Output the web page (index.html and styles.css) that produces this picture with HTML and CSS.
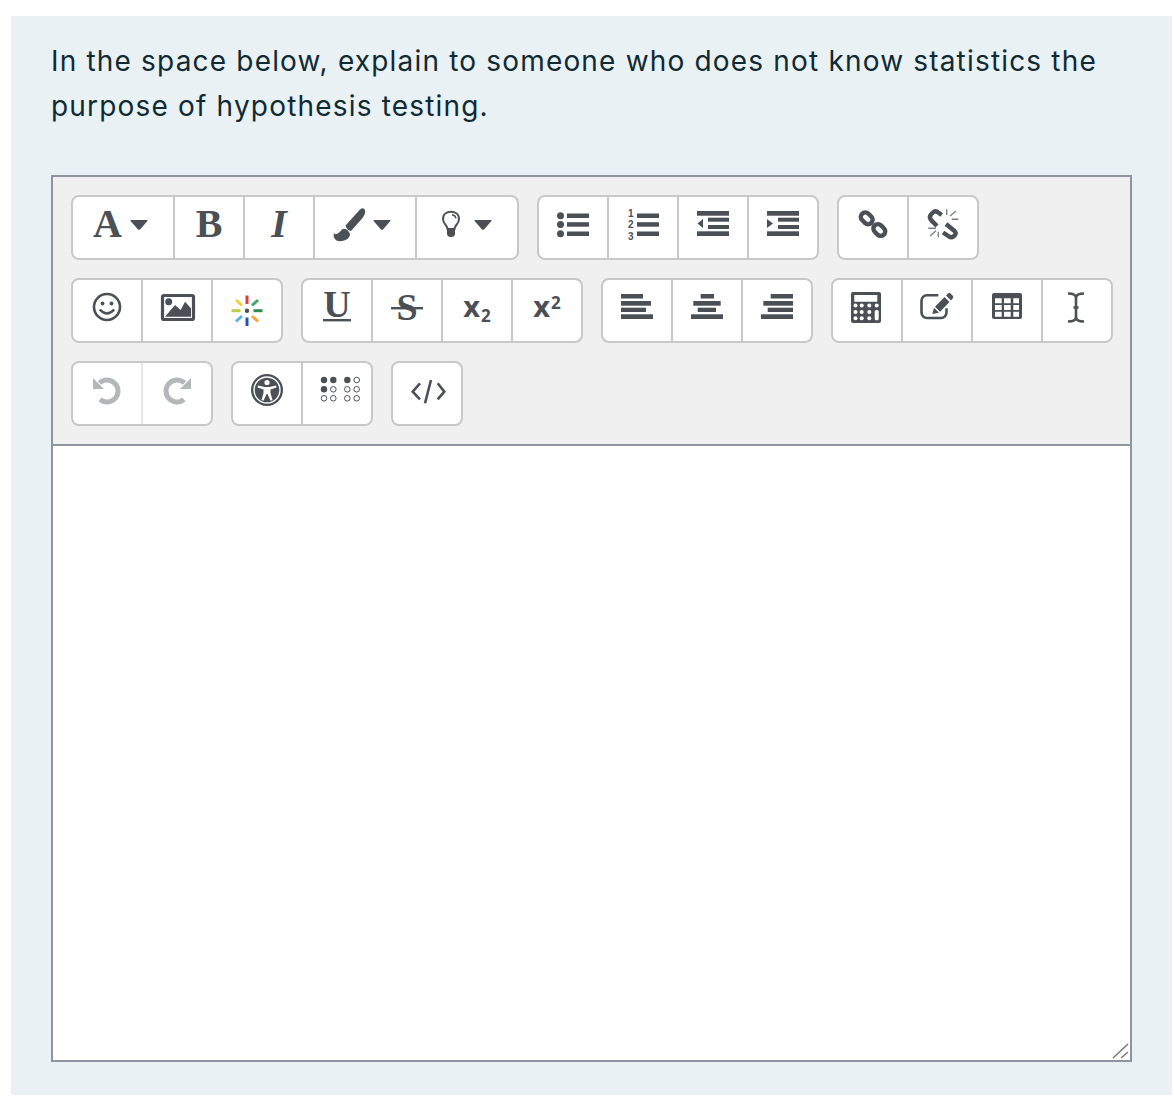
FILE: index.html
```html
<!DOCTYPE html>
<html lang="en">
<head>
    <meta charset="UTF-8">
    <title>Essay question</title>
    <link rel="stylesheet" href="styles.css">
</head>
<body>
    <div class="question">
        <p class="prompt">In the space below, explain to someone who does not know statistics the purpose of hypothesis testing.</p>

        <div class="editor">
            <div class="toolbar">
                <!-- Row 1 -->
                <div class="row">
                    <div class="group">
                        <button class="btn wide shift-a"><span class="serif">A</span><svg class="caret" viewBox="0 0 18 10"><path d="M1 0h16q1 0 .4 1L10 9.400q-1 .8-2 0L.6 1Q0 0 1 0z"/></svg></button>
                        <button class="btn"><span class="serif">B</span></button>
                        <button class="btn"><span class="serif italic">I</span></button>
                        <button class="btn wide shift-brush">
                            <svg class="icon brush" viewBox="0 0 32 36"><path d="M27 3.500Q30.500 1 32 4Q33 7 29.500 12L18 25Q14 24.500 12.500 19.500z"/><path d="M1 27C3 30 6 27 9 23.500C12 21 17 25 17 29C16 34 8 36.500 3.500 34.500C1 33 0 30 1 27z"/></svg>
                            <svg class="caret" viewBox="0 0 18 10"><path d="M1 0h16q1 0 .4 1L10 9.400q-1 .8-2 0L.6 1Q0 0 1 0z"/></svg>
                        </button>
                        <button class="btn wide">
                            <svg class="icon bulb" viewBox="0 0 24 36"><path class="line thin" d="M5.500 23C5.500 19.500 1 18 1 13C1 8 5 5.800 9 5.800C13 5.800 17 8 17 13C17 18 12.500 19.500 12.500 23z"/><path class="line hair" d="M10 8.800Q13.500 9.300 14 12.500"/><path d="M5 22h8v5.500q0 3.500-4 3.500t-4-3.500z"/></svg>
                            <svg class="caret" viewBox="0 0 18 10"><path d="M1 0h16q1 0 .4 1L10 9.400q-1 .8-2 0L.6 1Q0 0 1 0z"/></svg>
                        </button>
                    </div>
                    <div class="group">
                        <button class="btn"><svg class="icon" viewBox="0 0 36 36"><circle cx="5.500" cy="9.700" r="3.500"/><circle cx="5.500" cy="18.500" r="3.500"/><circle cx="5.500" cy="27.700" r="3.500"/><rect x="12" y="7.500" width="22" height="4.500"/><rect x="12" y="16.200" width="22" height="4.500"/><rect x="12" y="25.500" width="22" height="4.500"/></svg></button>
                        <button class="btn"><svg class="icon" viewBox="0 0 36 36"><text class="digit" x="3" y="10.700">1</text><text class="digit" x="3" y="22.300">2</text><text class="digit" x="3" y="34">3</text><rect x="12" y="7.500" width="22" height="4.500"/><rect x="12" y="16.200" width="22" height="4.500"/><rect x="12" y="25.500" width="22" height="4.500"/></svg></button>
                        <button class="btn"><svg class="icon" viewBox="0 0 36 36"><rect x="2" y="5" width="32" height="4.700"/><rect x="13" y="11.700" width="21" height="4"/><rect x="13" y="19" width="21" height="4"/><rect x="2" y="25.300" width="32" height="4.700"/><path d="M8 13v9l-5.500-4.500z"/></svg></button>
                        <button class="btn"><svg class="icon" viewBox="0 0 36 36"><rect x="2" y="5" width="32" height="4.700"/><rect x="13" y="11.700" width="21" height="4"/><rect x="13" y="19" width="21" height="4"/><rect x="2" y="25.300" width="32" height="4.700"/><path d="M2 13v9l6-4.500z"/></svg></button>
                    </div>
                    <div class="group">
                        <button class="btn"><svg class="icon" viewBox="0 0 36 36"><rect class="line bold" x="5.200" y="7.800" width="13" height="9" rx="4.500" transform="rotate(45 11.700 12.300)"/><rect class="line bold" x="17.800" y="19.500" width="13" height="9" rx="4.500" transform="rotate(45 24.300 24)"/></svg></button>
                        <button class="btn"><svg class="icon" viewBox="0 0 36 36"><path class="line bold" d="M16.700 9L12.500 6Q10 4.500 8 6.500L6 8.500Q3.800 11 6 14L12 20"/><path class="line bold" d="M21 18L29.500 25Q31.500 27 30 29L28.500 30.500Q26.500 32 24 30.500L18 26.500"/><path class="line hair spark" d="M21.700 3.300V9M25 10L31 5M26.700 13.300H33.300M3.300 22.300H11M5 30L11 24.700M13.300 25.700V31.300"/></svg></button>
                    </div>
                </div>

                <!-- Row 2 -->
                <div class="row">
                    <div class="group">
                        <button class="btn"><svg class="icon" viewBox="0 0 36 36"><circle class="line medium" cx="18" cy="18" r="13"/><circle cx="13.500" cy="14.500" r="1.900"/><circle cx="22.500" cy="14.500" r="1.900"/><path class="line medium" d="M10.800 20.500Q18 28.500 25.200 20.500"/></svg></button>
                        <button class="btn"><svg class="icon" viewBox="0 0 36 36"><rect class="line" x="3.500" y="6.500" width="31" height="24" rx="1.500"/><circle cx="9.700" cy="12.700" r="3.500"/><path d="M6 27.700L16 16L21.700 21L26 12.700L32 19.300V27.700z"/></svg></button>
                        <button class="btn"><svg class="icon" viewBox="0 0 36 36">
                            <circle cx="18" cy="21.700" r="2.200"/>
                            <g class="ray">
                                <path stroke="#d6403f" d="M18 6.500v8.500"/>
                                <path stroke="#41a66f" d="M29 11l-6 5.500"/>
                                <path stroke="#2f8f4f" d="M33.500 21.700h-9"/>
                                <path stroke="#f2a73b" d="M29 32.500l-6-5.500"/>
                                <path stroke="#2256a8" d="M18 37v-8.500"/>
                                <path stroke="#5bb3d9" d="M7 32.500l6-5.500"/>
                                <path stroke="#b8cf4a" d="M2.500 21.700h9"/>
                                <path stroke="#f0cf3c" d="M7 11l6 5.500"/>
                            </g>
                        </svg></button>
                    </div>
                    <div class="group">
                        <button class="btn"><svg class="icon" viewBox="0 0 36 36"><text class="serif-svg" x="18" y="28" text-anchor="middle">U</text><rect x="4" y="30" width="28" height="2.400"/></svg></button>
                        <button class="btn"><svg class="icon" viewBox="0 0 36 36"><text class="serif-svg" x="18" y="31" text-anchor="middle">S</text><rect x="2" y="18" width="32" height="2.400"/></svg></button>
                        <button class="btn"><span class="script">x<sub>2</sub></span></button>
                        <button class="btn"><span class="script">x<sup>2</sup></span></button>
                    </div>
                    <div class="group">
                        <button class="btn"><svg class="icon" viewBox="0 0 36 36"><rect x="2" y="5" width="22" height="4.500"/><rect x="2" y="12" width="30" height="4.700"/><rect x="2" y="18.700" width="25" height="4.300"/><rect x="2" y="25.300" width="32" height="4.700"/></svg></button>
                        <button class="btn"><svg class="icon" viewBox="0 0 36 36"><rect x="11.700" y="5" width="13.300" height="4.500"/><rect x="4.300" y="12" width="27.400" height="4.700"/><rect x="8.700" y="18.700" width="18.300" height="4.300"/><rect x="2" y="25.300" width="32" height="4.700"/></svg></button>
                        <button class="btn"><svg class="icon" viewBox="0 0 36 36"><rect x="11.700" y="5" width="22.300" height="4.500"/><rect x="4.300" y="12" width="29.700" height="4.700"/><rect x="8.700" y="18.700" width="25.300" height="4.300"/><rect x="2" y="25.300" width="32" height="4.700"/></svg></button>
                    </div>
                    <div class="group">
                        <button class="btn"><svg class="icon" viewBox="0 0 36 36"><path fill-rule="evenodd" d="M4 3h26q2 0 2 2v27q0 2-2 2H4q-2 0-2-2V5q0-2 2-2zM5.300 6v6.700h23V6z"/><g class="keys"><circle cx="6.500" cy="16.500" r="2"/><circle cx="12.700" cy="16.500" r="2"/><circle cx="20.300" cy="16.500" r="2"/><circle cx="27.700" cy="16.500" r="2"/><circle cx="6.500" cy="23" r="2"/><circle cx="12.700" cy="23" r="2"/><circle cx="20.300" cy="23" r="2"/><circle cx="6.500" cy="29.300" r="2"/><circle cx="12.700" cy="29.300" r="2"/><circle cx="20.300" cy="29.300" r="2"/><rect x="25.700" y="21" width="4" height="10.300" rx="1.500"/></g></svg></button>
                        <button class="btn"><svg class="icon" viewBox="0 0 36 36"><path class="line medium" d="M19.300 6.300H8a5.500 5.500 0 0 0-5.500 5.500V23.500a5.500 5.500 0 0 0 5.500 5.500h14a5.500 5.500 0 0 0 5.500-5.500V19.300"/><path d="M13.300 25l1.700-6.300L20 23.700z"/><path d="M16 17.700L25.500 8l5 5L21 22.700z"/><path d="M27 6.500L29.500 4Q30.500 3.500 31.500 4.500L34 7Q34.500 8 34 9L32 11.500z"/></svg></button>
                        <button class="btn"><svg class="icon" viewBox="0 0 36 36"><path fill-rule="evenodd" d="M5 4h26q2 0 2 2v22q0 2-2 2H5q-2 0-2-2V6q0-2 2-2zM6 9.300v5h6.700v-5zM15 9.300v5h6.700v-5zM24.300 9.300v5H30v-5zM6 16v5h6.700v-5zM15 16v5h6.700v-5zM24.300 16v5H30v-5zM6 22.700v5h6.700v-5zM15 22.700v5h6.700v-5zM24.300 22.700v5H30v-5z"/></svg></button>
                        <button class="btn"><svg class="icon" viewBox="0 0 36 36"><path class="line medium" d="M9 4.500C13 4.500 17 5.500 17 9V28C17 31.500 13 32.500 9 32.500M25 4.500C21 4.500 17 5.500 17 9M17 28C17 31.500 21 32.500 25 32.500M14.500 18.500h5"/></svg></button>
                    </div>
                </div>

                <!-- Row 3 -->
                <div class="row">
                    <div class="group">
                        <button class="btn faint"><svg class="icon muted" viewBox="0 0 36 36"><path class="line thick" d="M10.500 11A11 11 0 1 1 11 27.500"/><path d="M4 6v11h11z"/></svg></button>
                        <button class="btn"><svg class="icon muted" viewBox="0 0 36 36"><path class="line thick" d="M25.500 11A11 11 0 1 0 25 27.500"/><path d="M32 6v11H21z"/></svg></button>
                    </div>
                    <div class="group">
                        <button class="btn"><svg class="icon" viewBox="0 0 36 36"><circle cx="18" cy="18" r="16"/><circle class="ring" cx="18" cy="18" r="13"/><g class="figure"><circle cx="18" cy="10.500" r="2.600"/><path d="M9 13.500L15.500 15H20.500L27 13.500L27.500 15.500L21.500 17.500V21L23.500 28L21.500 28.700L18.500 22H17.500L14.500 28.700L12.500 28L14.500 21V17.500L8.500 15.500z"/></g></svg></button>
                        <button class="btn"><svg class="icon" viewBox="0 0 36 36"><circle cx="5" cy="8" r="3.200"/><circle cx="14.300" cy="8" r="3.200"/><circle cx="28.300" cy="8" r="3.200"/><circle class="dot" cx="37.700" cy="8" r="2.800"/><circle cx="5" cy="17.300" r="3.200"/><circle class="dot" cx="14.300" cy="17.300" r="2.800"/><circle class="dot" cx="28.300" cy="17.300" r="2.800"/><circle class="dot" cx="37.700" cy="17.300" r="2.800"/><circle class="dot" cx="5" cy="26.300" r="2.800"/><circle class="dot" cx="14.300" cy="26.300" r="2.800"/><circle class="dot" cx="28.300" cy="26.300" r="2.800"/><circle class="dot" cx="37.700" cy="26.300" r="2.800"/></svg></button>
                    </div>
                    <div class="group">
                        <button class="btn"><svg class="icon" viewBox="0 0 36 36"><path class="line medium" d="M11 11.300L3.700 19.700L11 27.300M28.700 11.300L35.300 19.700L28.700 27.300M22 8L16 31.300"/></svg></button>
                    </div>
                </div>
            </div>

            <div class="content-wrap">
                <textarea class="content" aria-label="Answer"></textarea>
                <svg class="grip" viewBox="0 0 18 18"><path d="M1 16L16 2M9 16L16 10"/></svg>
            </div>
        </div>
    </div>
</body>
</html>
```

FILE: styles.css
```css
/* General Styles */
body {
    margin: 16px 2px 13px 11px;
    background-color: #fff;
    font-family: Inter, "Noto Sans", sans-serif;
}

/* Question panel */
.question {
    background-color: #e9f1f4;
    padding: 23px 40px 33px 40px;
}

.prompt {
    margin: 0 0 46px 0;
    font-size: 28px;
    line-height: 45px;
    letter-spacing: 1.18px;
    color: #102a33;
}

/* Editor */
.editor {
    border: 2px solid #8f959e;
}

.toolbar {
    display: flex;
    flex-direction: column;
    gap: 18px;
    padding: 18px;
    background-color: #f0f0f0;
    border-bottom: 2px solid #8f959e;
}

.row {
    display: flex;
    gap: 18px;
}

.group {
    display: flex;
    border: 2px solid #c8c8c8;
    border-radius: 8px;
    background-color: #fff;
}

.btn {
    display: flex;
    align-items: center;
    justify-content: center;
    box-sizing: border-box;
    width: 70px;
    height: 61px;
    padding: 0 0 7px 0;
    background: none;
    border: none;
    border-right: 2px solid #c8c8c8;
    color: #4b5056;
}

.btn.wide {
    width: 102px;
}

.btn:last-child {
    width: 68px;
    border-right: none;
}

.btn.wide:last-child {
    width: 100px;
}

.btn.faint {
    border-right-color: #e6e6e6;
}

.shift-a {
    padding-right: 5px;
}

.shift-brush {
    padding-right: 7px;
}

/* Button text */
.serif {
    font-family: "Liberation Serif", serif;
    font-weight: bold;
    font-size: 40px;
    line-height: 40px;
}

.italic {
    font-style: italic;
}

.script {
    font-family: "Open Sans", sans-serif;
    font-weight: bold;
    font-size: 29px;
    line-height: 36px;
    margin-top: -2px;
}

.script sub,
.script sup {
    font-size: 17px;
    line-height: 0;
    margin-left: 1px;
}

.script sub {
    vertical-align: -5px;
}

.script sup {
    vertical-align: 8px;
}

/* Icons */
.icon {
    display: block;
    width: 36px;
    height: 36px;
    overflow: visible;
    fill: #4b5056;
}

.icon.brush {
    width: 32px;
}

.icon.bulb {
    width: 24px;
}

.icon.muted {
    fill: #b4b7ba;
}

.caret {
    width: 18px;
    height: 10px;
    margin-left: 8px;
    margin-top: 2px;
    fill: #4b5056;
}

.line {
    fill: none;
    stroke: #4b5056;
    stroke-width: 3.2;
}

.line.hair {
    stroke-width: 1.4;
}

.line.spark {
    stroke: #7d8186;
}

.line.thin {
    stroke-width: 2;
}

.line.medium {
    stroke-width: 2.6;
}

.line.bold {
    stroke-width: 4.4;
}

.line.thick {
    stroke: #b4b7ba;
    stroke-width: 5;
}

.ray path {
    fill: none;
    stroke-width: 3;
}

.keys,
.figure {
    fill: #fff;
}

.ring {
    fill: none;
    stroke: #fff;
    stroke-width: 1.4;
}

.dot {
    fill: #fff;
    stroke: #4b5056;
    stroke-width: 1;
}

.digit {
    font-family: "Liberation Sans", sans-serif;
    font-weight: bold;
    font-size: 10px;
}

.serif-svg {
    font-family: "Liberation Serif", serif;
    font-weight: bold;
    font-size: 38px;
}

/* Answer area */
.content-wrap {
    position: relative;
}

.content {
    display: block;
    box-sizing: border-box;
    width: 100%;
    height: 614px;
    margin: 0;
    padding: 8px;
    border: none;
    outline: none;
    background-color: #fff;
    resize: none;
}

.grip {
    position: absolute;
    right: 0;
    bottom: 0;
    width: 18px;
    height: 18px;
    fill: none;
    stroke: #777;
    stroke-width: 1.5;
}
```
